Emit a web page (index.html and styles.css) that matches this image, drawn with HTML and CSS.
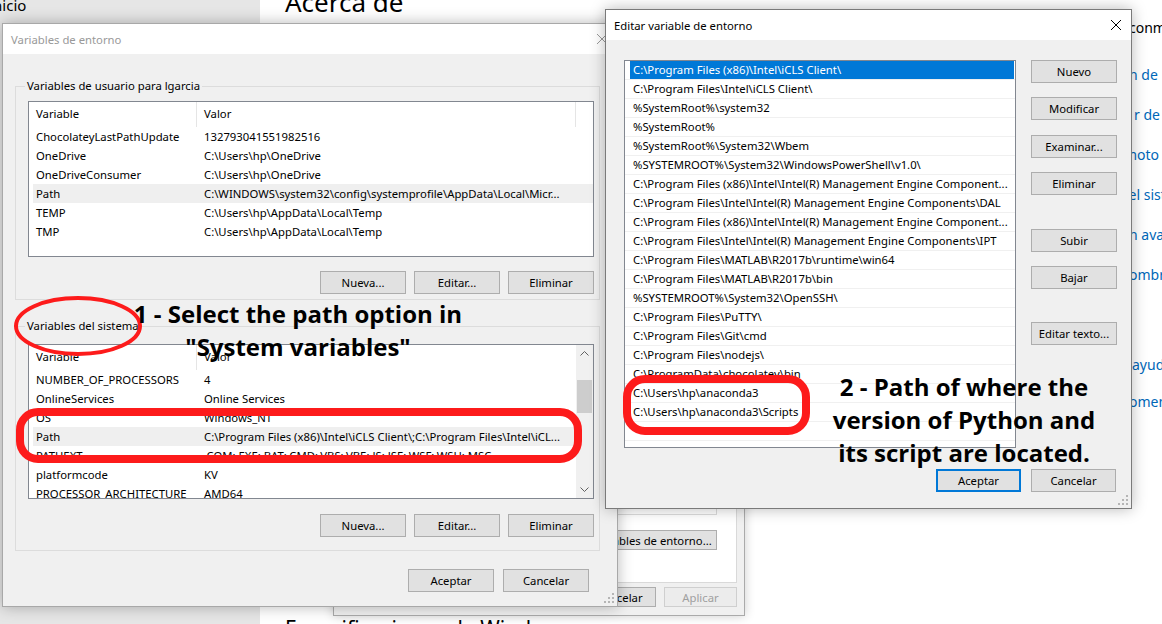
FILE: index.html
```html
<!DOCTYPE html>
<html lang="es">
<head>
<meta charset="utf-8">
<title>Variables de entorno</title>
<link rel="stylesheet" href="styles.css">
</head>
<body>
<div class="screen">

  <div class="settings">
    <nav class="nav"><div class="nav-home">Inicio</div></nav>
    <main class="page">
      <h1 class="page-title">Acerca de</h1>
      <h2 class="page-sub">Especificaciones de Windows</h2>
    </main>
    <aside class="related">
      <div class="rel-head">conmutador</div>
      <a class="rel-link first">n de BitLocker</a>
      <a class="rel-link r-right">r de dispositivos</a>
      <a class="rel-link r-left">moto</a>
      <a class="rel-link r-left2">del sistema</a>
      <a class="rel-link">n avanzada</a>
      <a class="rel-link">ombre</a>
      <a class="rel-link gap r-nudge">ayuda</a>
      <a class="rel-link last">omentarios</a>
    </aside>
  </div>

  <section class="win sysprops">
    <div class="sp-body">
      <div class="sp-panel">
        <div class="sp-box"></div>
        <div class="sp-envbtn">Variables de entorno...</div>
      </div>
      <div class="sp-footer">
        <div class="btn sp-btn">Aceptar</div>
        <div class="btn sp-btn">Cancelar</div>
        <div class="btn sp-btn disabled">Aplicar</div>
      </div>
    </div>
  </section>

  <section class="win env">
    <header class="titlebar">
      <span class="title inactive">Variables de entorno</span>
      <svg class="close" width="10" height="10" viewBox="0 0 10 10"><path d="M0 0L10 10M10 0L0 10" stroke="#9a9a9a" stroke-width="1"/></svg>
    </header>
    <div class="env-body">
      <fieldset class="group g1">
        <legend>Variables de usuario para lgarcia</legend>
        <div class="list ulist">
          <div class="lv-head"><span>Variable</span><span>Valor</span><span></span></div>
          <div class="lv-row"><span>ChocolateyLastPathUpdate</span><span>132793041551982516</span></div>
          <div class="lv-row"><span>OneDrive</span><span>C:\Users\hp\OneDrive</span></div>
          <div class="lv-row"><span>OneDriveConsumer</span><span>C:\Users\hp\OneDrive</span></div>
          <div class="lv-row sel"><span>Path</span><span>C:\WINDOWS\system32\config\systemprofile\AppData\Local\Micr...</span></div>
          <div class="lv-row"><span>TEMP</span><span>C:\Users\hp\AppData\Local\Temp</span></div>
          <div class="lv-row"><span>TMP</span><span>C:\Users\hp\AppData\Local\Temp</span></div>
        </div>
        <div class="btn-row">
          <div class="btn">Nueva...</div>
          <div class="btn">Editar...</div>
          <div class="btn">Eliminar</div>
        </div>
      </fieldset>

      <fieldset class="group g2">
        <legend>Variables del sistema</legend>
        <div class="list slist">
          <div class="lv-main">
            <div class="lv-head"><span>Variable</span><span>Valor</span></div>
            <div class="lv-row"><span>NUMBER_OF_PROCESSORS</span><span>4</span></div>
            <div class="lv-row"><span>OnlineServices</span><span>Online Services</span></div>
            <div class="lv-row"><span>OS</span><span>Windows_NT</span></div>
            <div class="lv-row sel"><span>Path</span><span>C:\Program Files (x86)\Intel\iCLS Client\;C:\Program Files\Intel\iCL...</span></div>
            <div class="lv-row"><span>PATHEXT</span><span>.COM;.EXE;.BAT;.CMD;.VBS;.VBE;.JS;.JSE;.WSF;.WSH;.MSC</span></div>
            <div class="lv-row"><span>platformcode</span><span>KV</span></div>
            <div class="lv-row"><span>PROCESSOR_ARCHITECTURE</span><span>AMD64</span></div>
          </div>
          <div class="vscroll">
            <div class="arrow"><svg width="9" height="5" viewBox="0 0 9 5"><path d="M0.5 4.5L4.5 0.5L8.5 4.5" fill="none" stroke="#606060"/></svg></div>
            <div class="track"><div class="thumb"></div></div>
            <div class="arrow"><svg width="9" height="5" viewBox="0 0 9 5"><path d="M0.5 0.5L4.5 4.5L8.5 0.5" fill="none" stroke="#606060"/></svg></div>
          </div>
        </div>
        <div class="btn-row">
          <div class="btn">Nueva...</div>
          <div class="btn">Editar...</div>
          <div class="btn">Eliminar</div>
        </div>
      </fieldset>

      <div class="footer">
        <div class="btn">Aceptar</div>
        <div class="btn">Cancelar</div>
      </div>
    </div>
    <svg class="grip" width="10" height="10" viewBox="0 0 10 10"><g fill="#b5b5b5"><rect x="8" y="0" width="2" height="2"/><rect x="4" y="4" width="2" height="2"/><rect x="8" y="4" width="2" height="2"/><rect x="0" y="8" width="2" height="2"/><rect x="4" y="8" width="2" height="2"/><rect x="8" y="8" width="2" height="2"/></g></svg>
  </section>

  <section class="win edit">
    <header class="titlebar">
      <span class="title">Editar variable de entorno</span>
      <svg class="close" width="10" height="10" viewBox="0 0 10 10"><path d="M0 0L10 10M10 0L0 10" stroke="#000" stroke-width="1"/></svg>
    </header>
    <div class="edit-body">
      <div class="plist">
        <div class="prow sel"><span>C:\Program Files (x86)\Intel\iCLS Client\</span></div>
        <div class="prow"><span>C:\Program Files\Intel\iCLS Client\</span></div>
        <div class="prow"><span>%SystemRoot%\system32</span></div>
        <div class="prow"><span>%SystemRoot%</span></div>
        <div class="prow"><span>%SystemRoot%\System32\Wbem</span></div>
        <div class="prow"><span>%SYSTEMROOT%\System32\WindowsPowerShell\v1.0\</span></div>
        <div class="prow"><span>C:\Program Files (x86)\Intel\Intel(R) Management Engine Component...</span></div>
        <div class="prow"><span>C:\Program Files\Intel\Intel(R) Management Engine Components\DAL</span></div>
        <div class="prow"><span>C:\Program Files (x86)\Intel\Intel(R) Management Engine Component...</span></div>
        <div class="prow"><span>C:\Program Files\Intel\Intel(R) Management Engine Components\IPT</span></div>
        <div class="prow"><span>C:\Program Files\MATLAB\R2017b\runtime\win64</span></div>
        <div class="prow"><span>C:\Program Files\MATLAB\R2017b\bin</span></div>
        <div class="prow"><span>%SYSTEMROOT%\System32\OpenSSH\</span></div>
        <div class="prow"><span>C:\Program Files\PuTTY\</span></div>
        <div class="prow"><span>C:\Program Files\Git\cmd</span></div>
        <div class="prow"><span>C:\Program Files\nodejs\</span></div>
        <div class="prow"><span>C:\ProgramData\chocolatey\bin</span></div>
        <div class="prow"><span>C:\Users\hp\anaconda3</span></div>
        <div class="prow"><span>C:\Users\hp\anaconda3\Scripts</span></div>
        <div class="prow"><span></span></div>
      </div>
      <div class="side-btns">
        <div class="btn">Nuevo</div>
        <div class="btn">Modificar</div>
        <div class="btn g15">Examinar...</div>
        <div class="btn">Eliminar</div>
        <div class="btn g34">Subir</div>
        <div class="btn">Bajar</div>
        <div class="btn g33">Editar texto...</div>
      </div>
      <div class="edit-footer">
        <div class="btn default">Aceptar</div>
        <div class="btn">Cancelar</div>
      </div>
    </div>
    <svg class="grip" width="10" height="10" viewBox="0 0 10 10"><g fill="#b5b5b5"><rect x="8" y="0" width="2" height="2"/><rect x="4" y="4" width="2" height="2"/><rect x="8" y="4" width="2" height="2"/><rect x="0" y="8" width="2" height="2"/><rect x="4" y="8" width="2" height="2"/><rect x="8" y="8" width="2" height="2"/></g></svg>
  </section>

  <svg class="marks" width="1162" height="624" viewBox="0 0 1162 624">
    <ellipse cx="78" cy="326" rx="62" ry="28" fill="none" stroke="#fd1b1b" stroke-width="4"/>
    <rect x="20" y="412" width="558" height="47" rx="18" fill="none" stroke="#fd1b1b" stroke-width="8"/>
    <rect x="627" y="379" width="179" height="52" rx="18" fill="none" stroke="#fd1b1b" stroke-width="8"/>
  </svg>

  <div class="note note1">1 - Select the path option in<br>"System variables"</div>
  <div class="note note2">2 - Path of where the<br>version of Python and<br>its script are located.</div>
</div>
</body>
</html>
```

FILE: styles.css
```css
* { box-sizing: border-box; }
html, body { margin: 0; padding: 0; }
body {
  width: 1162px;
  height: 624px;
  overflow: hidden;
  background: #fff;
  font-family: "Noto Sans", "Open Sans", sans-serif;
}
.screen { position: relative; width: 1162px; height: 624px; overflow: hidden; }

/* background settings page */
.settings { display: flex; height: 624px; }
.nav { width: 260px; flex: none; background: #e6e6e6; }
.nav-home { font-size: 15px; line-height: 20px; margin-top: -5px; text-indent: -12px; color: #000; }
.page { width: 869px; flex: none; padding-left: 25px; display: flex; flex-direction: column; }
.page-title { font-size: 26px; font-weight: 400; margin: -15px 0 0; line-height: 34px; color: #000; }
.page-sub { margin: auto 0 -17px; font-size: 21px; font-weight: 400; line-height: 26px; color: #000; }
.related { flex: 1; display: flex; flex-direction: column; font-size: 14px; line-height: 20px; white-space: nowrap; padding-top: 18px; }
.rel-head { color: #000; }
.rel-link { color: #0067b8; margin-top: 20px; }
.rel-link.first { margin-top: 27px; }
.rel-link.gap { margin-top: 70px; }
.rel-link.last { margin-top: 17px; }
.rel-link.r-right { text-indent: 5px; }
.rel-link.r-left { text-indent: -5px; }
.rel-link.r-left2 { text-indent: -9px; }
.rel-link.r-nudge { text-indent: 3px; }

/* windows */
.win {
  position: absolute;
  display: flex;
  flex-direction: column;
  background: #f0f0f0;
  box-shadow: 0 0 14px rgba(0, 0, 0, 0.28);
  font-size: 11.3px;
  color: #000;
}
.titlebar {
  flex: none;
  height: 30px;
  background: #fff;
  display: flex;
  align-items: center;
  justify-content: space-between;
  padding: 0 10px 0 8px;
}
.title.inactive { color: #999; }
.close { display: block; }
.grip { position: absolute; right: 3px; bottom: 3px; }

.btn {
  height: 23px;
  width: 86px;
  border: 1px solid #adadad;
  background: #e1e1e1;
  display: flex;
  align-items: center;
  justify-content: center;
  white-space: nowrap;
  flex: none;
}

/* environment variables dialog */
.env { left: 2px; top: 23px; width: 616px; height: 584px; border: 1px solid #a8a8a8; }
.env-body { padding: 24px 17px 0 12px; display: flex; flex-direction: column; }
.group { margin: 0; border: 1px solid #dcdcdc; min-width: 0; }
.group legend { padding: 0 2px; margin-left: -3px; line-height: 16px; font-size: inherit; }
.g1 { padding: 7px 5px 5px 12px; }
.g2 { padding: 10px 5px 13px 12px; margin-top: 18px; }
.list { background: #fff; border: 1px solid #828790; overflow: hidden; }
.ulist { height: 156px; }
.slist { height: 155px; display: grid; grid-template-columns: 1fr 17px; }
.lv-main { overflow: hidden; min-width: 0; }
.lv-head { display: grid; grid-template-columns: 168px 379px 1fr; height: 25px; line-height: 24px; }
.slist .lv-head { grid-template-columns: 168px 1fr; }
.lv-head span { padding-left: 7px; border-right: 1px solid #e5e5e5; }
.lv-head span:last-child { border-right: none; }
.ulist .lv-head span:nth-child(2) { border-right: 1px solid #e5e5e5; }
.slist .lv-head span:nth-child(2) { border-right: none; }
.lv-row { display: grid; grid-template-columns: 164px 379px; height: 19px; line-height: 19px; margin-left: 4px; white-space: nowrap; }
.lv-row span { overflow: hidden; }
.lv-row span:first-child { padding-left: 3px; }
.lv-row span:last-child { padding-left: 7px; }
.lv-row.sel { background: #efefef; }
.vscroll { background: #f0f0f0; display: flex; flex-direction: column; }
.arrow { height: 17px; display: flex; align-items: center; justify-content: center; flex: none; }
.track { flex: 1; padding: 18px 1px 0; }
.thumb { height: 33px; background: #cdcdcd; }
.btn-row { display: flex; justify-content: flex-end; gap: 8px; margin-top: 14px; }
.g2 .btn-row { margin-top: 15px; }
.footer { display: flex; justify-content: flex-end; gap: 9px; margin-top: 18px; margin-right: 11px; }

/* edit dialog */
.edit { left: 605px; top: 9px; width: 527px; height: 500px; border: 1px solid #7a7a7a; }
.edit-body {
  display: grid;
  grid-template-columns: 392px 86px;
  column-gap: 15px;
  padding: 20px 14px 0 18px;
}
.plist { height: 388px; background: #fff; border: 1px solid #828790; overflow: hidden; }
.prow { height: 19px; border-bottom: 1px solid #f0f0f0; }
.prow span { display: block; height: 18px; line-height: 18px; margin: 0 1px 0 5px; padding-left: 3px; white-space: nowrap; overflow: hidden; }
.prow.sel span { background: #0078d7; color: #fff; }
.side-btns { display: flex; flex-direction: column; gap: 14px; }
.side-btns .g15 { margin-top: 1px; }
.side-btns .g34 { margin-top: 20px; }
.side-btns .g33 { margin-top: 19px; }
.edit-footer { grid-column: 1 / -1; display: flex; justify-content: flex-end; gap: 10px; margin-top: 21px; margin-right: 1px; }
.edit-footer .btn { width: 85px; }
.btn.default { border: 2px solid #0078d7; }

/* system properties (behind) */
.sysprops { left: 333px; top: 90px; width: 412px; height: 526px; border: 1px solid #aaa; box-shadow: 0 0 10px rgba(0,0,0,.2); }
.sp-body { flex: 1; display: flex; flex-direction: column; padding: 0 7px 8px 9px; }
.sp-panel { flex: 1; background: #fff; border: 1px solid #d9d9d9; display: flex; flex-direction: column; align-items: flex-end; padding-right: 6px; }
.sp-box { margin-top: auto; width: 120px; height: 40px; border: 1px solid #dcdcdc; border-top: none; margin-right: 13px; }
.sp-envbtn { margin-top: 15px; margin-bottom: 32px; margin-right: 13px; height: 20px; width: 130px; border: 1px solid #adadad; background: #e1e1e1; display: flex; align-items: center; justify-content: center; white-space: nowrap; }
.sp-footer { display: flex; justify-content: flex-end; gap: 8px; margin-top: 4px; }
.sp-btn { width: 73px; height: 20px; }
.sp-btn.disabled { color: #a0a0a0; background: #ececec; border-color: #cfcfcf; }

/* annotations */
.marks { position: absolute; left: 0; top: 0; pointer-events: none; }
.note {
  position: absolute;
  font-family: "Open Sans", "Noto Sans", sans-serif;
  font-weight: 700;
  font-size: 24px;
  line-height: 33px;
  text-align: center;
  color: #000;
  white-space: nowrap;
  transform: translateX(-50%);
}
.note1 { left: 298px; top: 297px; }
.note2 { left: 964px; top: 370px; }
```
